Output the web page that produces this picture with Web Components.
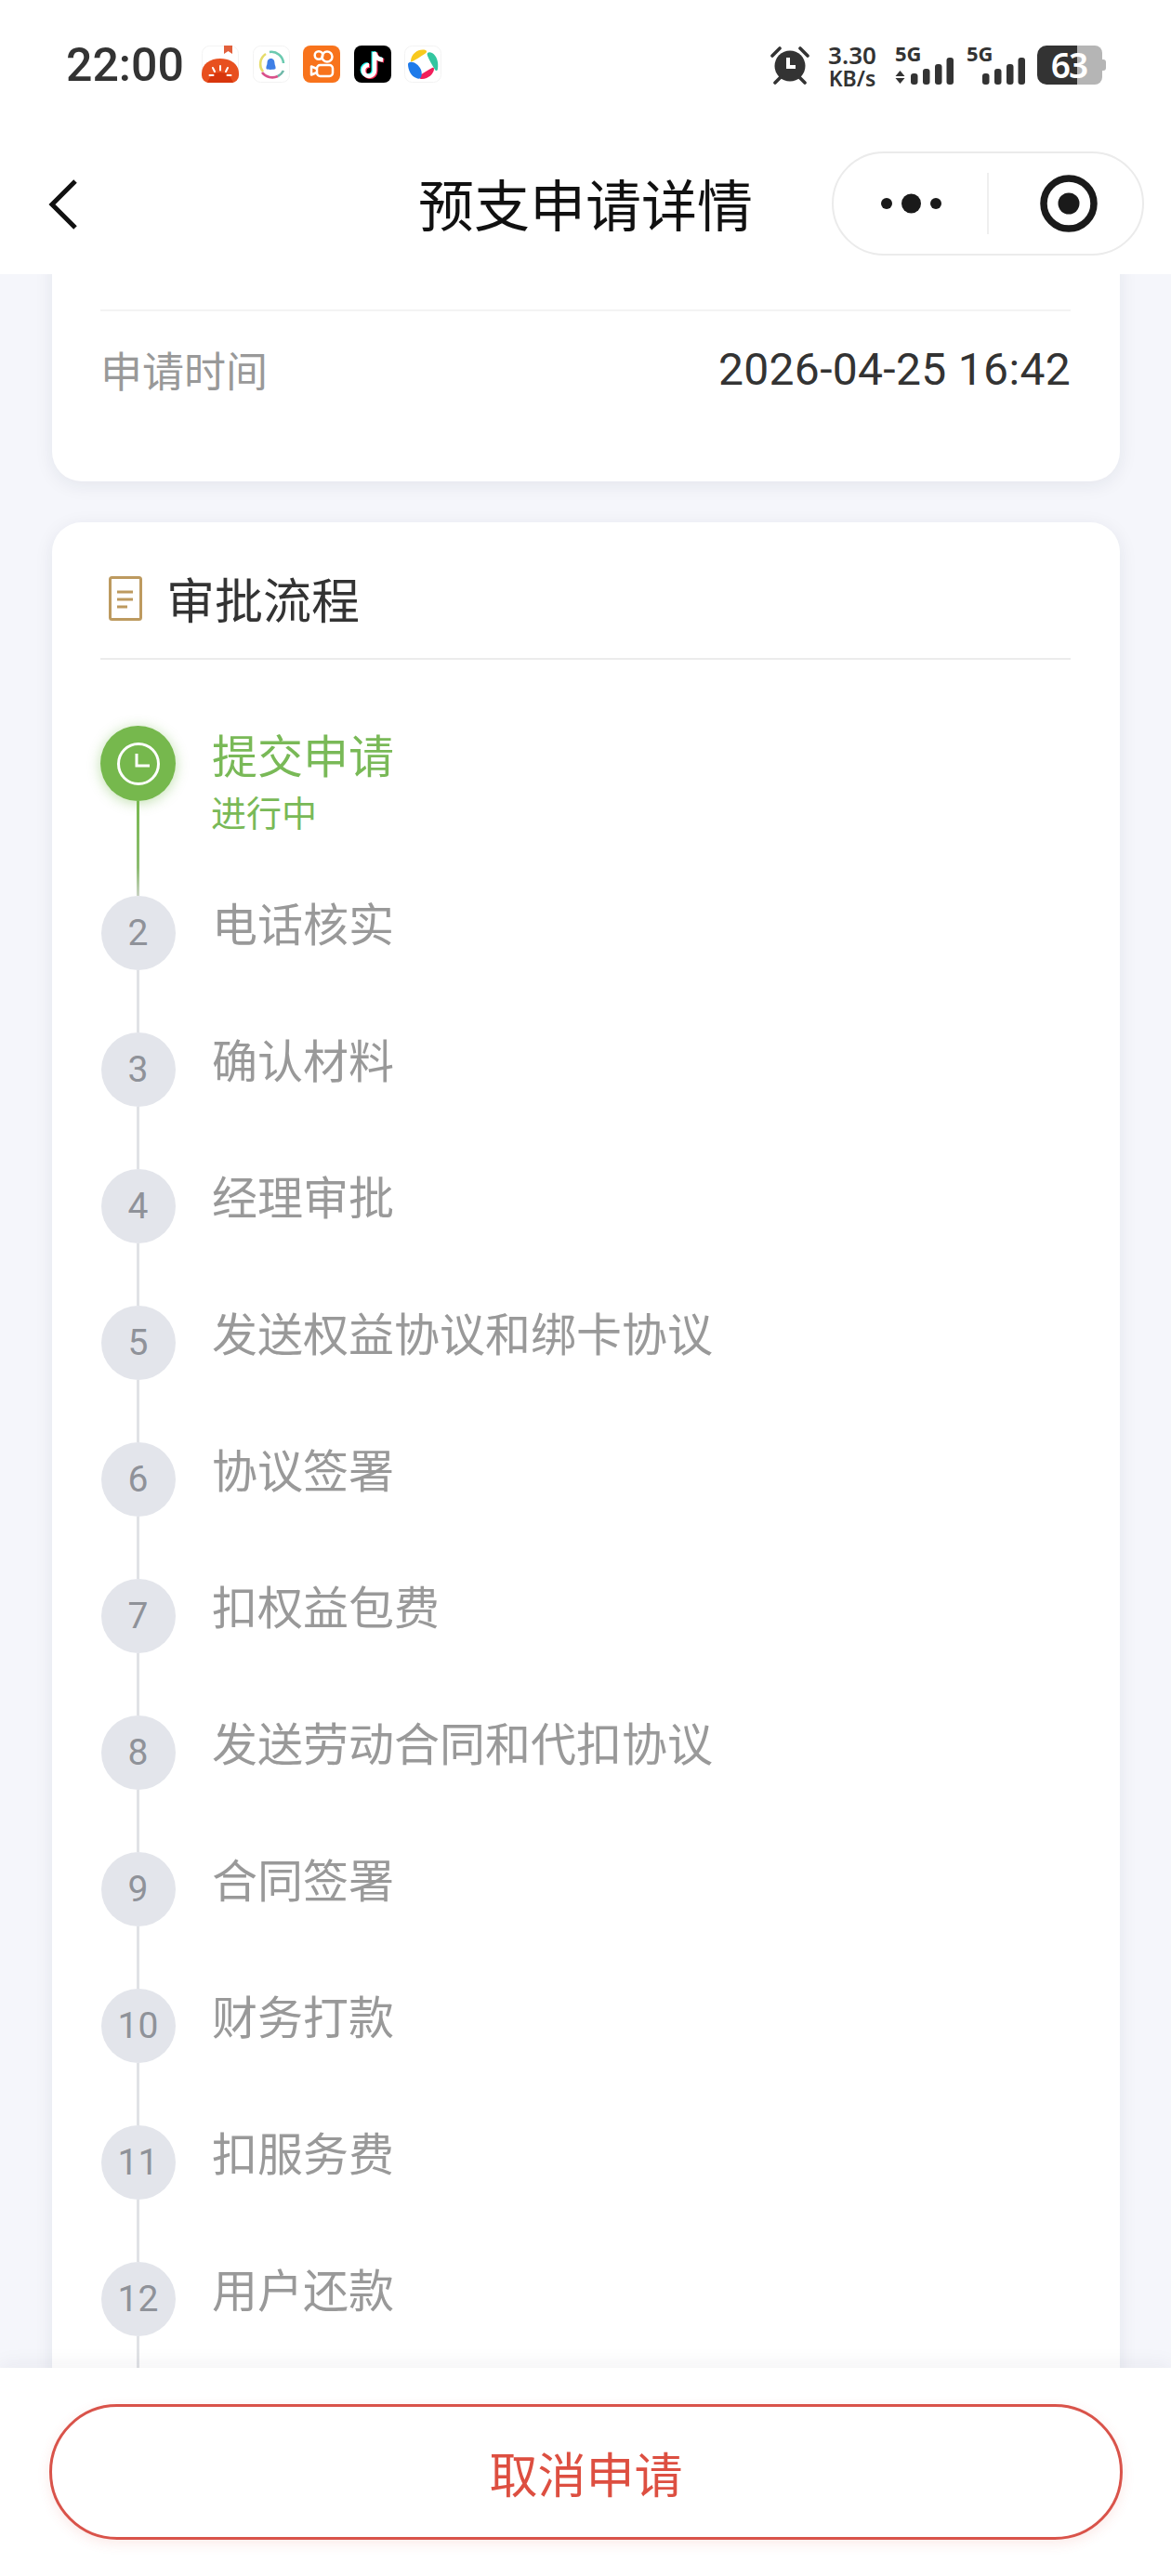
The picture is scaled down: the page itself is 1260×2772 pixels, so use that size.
<!DOCTYPE html>
<html lang="zh">
<head>
<meta charset="utf-8">
<title>预支申请详情</title>
<style>
  html, body { margin: 0; padding: 0; }
  body {
    width: 1260px;
    height: 2772px;
    overflow: hidden;
    background: #f5f6fb;
    font-family: Roboto, "Noto Sans CJK SC", sans-serif;
  }
</style>
</head>
<body>
<app-page>
  <status-bar slot="top"></status-bar>
  <nav-bar slot="top">预支申请详情</nav-bar>

  <app-card flush>
    <detail-row label="申请时间">2026-04-25 16:42</detail-row>
  </app-card>

  <app-card>
    <section-header>审批流程</section-header>
    <flow-list>
      <flow-step state="active" note="进行中">提交申请</flow-step>
      <flow-step num="2">电话核实</flow-step>
      <flow-step num="3">确认材料</flow-step>
      <flow-step num="4">经理审批</flow-step>
      <flow-step num="5">发送权益协议和绑卡协议</flow-step>
      <flow-step num="6">协议签署</flow-step>
      <flow-step num="7">扣权益包费</flow-step>
      <flow-step num="8">发送劳动合同和代扣协议</flow-step>
      <flow-step num="9">合同签署</flow-step>
      <flow-step num="10">财务打款</flow-step>
      <flow-step num="11">扣服务费</flow-step>
      <flow-step num="12">用户还款</flow-step>
    </flow-list>
  </app-card>

  <cancel-bar slot="bottom">取消申请</cancel-bar>
</app-page>

<script>
// AppPage.js
class AppPage extends HTMLElement {
  constructor() {
    super();
    this.attachShadow({ mode: 'open' });
    this.shadowRoot.innerHTML = `
      <style>
        :host { display: flex; flex-direction: column; width: 1260px; height: 2772px; overflow: hidden; }
        .head { background: #fff; position: relative; z-index: 2; }
        .body { flex: 1; min-height: 0; overflow: hidden; padding: 0 55px 0 56px; display: flex; flex-direction: column; gap: 44px; }
        .foot { position: relative; z-index: 2; }
      </style>
      <div class="head"><slot name="top"></slot></div>
      <div class="body"><slot></slot></div>
      <div class="foot"><slot name="bottom"></slot></div>
    `;
  }
}

// StatusBar.js
class StatusBar extends HTMLElement {
  constructor() {
    super();
    this.attachShadow({ mode: 'open' });
    const bars = `
      <rect x="17" y="30" width="7.500" height="12" rx="3" fill="#333"/>
      <rect x="30" y="25" width="7.500" height="17" rx="3" fill="#333"/>
      <rect x="43" y="20" width="7.500" height="22" rx="3" fill="#333"/>
      <rect x="55.500" y="13" width="7.500" height="29" rx="3" fill="#333"/>`;
    this.shadowRoot.innerHTML = `
      <style>
        :host { display: flex; justify-content: space-between; align-items: flex-start; height: 143px; box-sizing: border-box; padding: 49px 70px 0 71px; color: #333; }
        .left, .right { display: flex; align-items: flex-start; }
        .time { font: 500 50px/42px Roboto, sans-serif; width: 146px; letter-spacing: 0; }
        .apps { display: flex; gap: 14.5px; }
        .apps svg { display: block; width: 40px; height: 40px; }
        .alarm { width: 42px; height: 42px; display: block; margin-right: 20px; }
        .speed { width: 52px; margin-right: 20px; font-family: "Noto Sans", sans-serif; font-weight: 600; text-align: center; display: flex; flex-direction: column; align-items: center; }
        .speed b { font-weight: 600; font-size: 26px; line-height: 20px; }
        .speed i { font-style: normal; font-size: 23px; line-height: 18px; margin-top: 6px; white-space: nowrap; }
        .sim { display: grid; width: 63px; height: 42px; }
        .sim > * { grid-area: 1 / 1; }
        .sim svg { display: block; width: 63px; height: 42px; }
        .sim span { font: 700 22px/17px "Noto Sans", sans-serif; }
        .sim.a { margin-right: 14px; }
        .sim.b { margin-right: 13px; }
        .battery { display: grid; width: 74px; height: 42px; }
        .battery > * { grid-area: 1 / 1; }
        .battery svg { display: block; width: 74px; height: 42px; }
        .battery span { color: #fff; font: 600 37px/42px "Noto Sans", sans-serif; letter-spacing: -2px; text-align: center; padding-right: 6px; }
      </style>
      <div class="left">
        <div class="time">22:00</div>
        <div class="apps">
          <svg viewBox="0 0 40 40">
            <rect x=".5" y=".5" width="39" height="39" rx="8" fill="#fff" stroke="#f3f3f3"/>
            <path d="M24 0h9v9l-4.500-3L24 9z" fill="#e2603c"/>
            <path d="M0 30C0 20 9 14 20 14s20 6 20 16v2a8 8 0 0 1-8 8H8a8 8 0 0 1-8-8z" fill="#e8501f"/>
            <path d="M6 40c3-8 8-11 14-11s11 3 14 11z" fill="#d8360c"/>
            <path d="M20 22v4.500M12 24l2 4M28 24l-2 4M8.500 32h4M27.500 32h4" stroke="#fff" stroke-width="2" stroke-linecap="round" fill="none"/>
          </svg>
          <svg viewBox="0 0 40 40">
            <rect x=".5" y=".5" width="39" height="39" rx="8" fill="#fff" stroke="#f3f3f3"/>
            <path d="M11 28A13 13 0 0 1 14 9" stroke="#e6dc6a" stroke-width="2.600" fill="none"/>
            <path d="M18 7A13 13 0 0 1 33 19" stroke="#6ccab0" stroke-width="2.600" fill="none"/>
            <path d="M10 29A14 14 0 0 0 27 33" stroke="#d9508a" stroke-width="2.600" fill="none"/>
            <path d="M27 33A14 14 0 0 0 33 27" stroke="#6fb8a8" stroke-width="2.600" fill="none"/>
            <path d="M19.500 14c3 0 4 2.500 4 5 0 2 1.500 3.500 1 6-2.500 1.200-8.500 1.200-10 0-.5-2.500 1-4 1-6 0-2.500 1-5 4-5z" fill="#3f7fe6"/>
          </svg>
          <svg viewBox="0 0 40 40">
            <rect width="40" height="40" rx="8" fill="#f8731c"/>
            <circle cx="17" cy="10.500" r="4.300" fill="none" stroke="#fff" stroke-width="2.500"/>
            <circle cx="26" cy="12" r="5.500" fill="none" stroke="#fff" stroke-width="2.500"/>
            <rect x="15" y="21" width="17" height="12" rx="3.500" fill="none" stroke="#fff" stroke-width="2.500"/>
            <path d="M15 25l-6-2.500v9l6-2.500" fill="none" stroke="#fff" stroke-width="2.500" stroke-linejoin="round"/>
          </svg>
          <svg viewBox="0 0 40 40">
            <rect width="40" height="40" rx="8" fill="#000"/>
            <path d="M22 7v20a6 6 0 1 1-6-6M22 7c.5 5 4 8 9 8.500" fill="none" stroke="#25f4ee" stroke-width="4.500" transform="translate(-1.200 -.8)"/>
            <path d="M22 7v20a6 6 0 1 1-6-6M22 7c.5 5 4 8 9 8.500" fill="none" stroke="#fe2c55" stroke-width="4.500" transform="translate(1.200 .8)"/>
            <path d="M22 7v20a6 6 0 1 1-6-6M22 7c.5 5 4 8 9 8.500" fill="none" stroke="#fff" stroke-width="4.500"/>
          </svg>
          <svg viewBox="0 0 40 40">
            <rect x=".5" y=".5" width="39" height="39" rx="8" fill="#fff" stroke="#f3f3f3"/>
            <path d="M7 16C8 8 16 3 23 5c2 1 1 3-1 4-5 3-9 6-13 8-2 1-2 0-2-1z" fill="#f8c91e"/>
            <path d="M25 8c1-1 3-1 5 0 5 3 7 10 6 17 0 2-2 3-3 1-3-5-6-10-8-15-.5-1-.5-2 0-3z" fill="#33c6a0"/>
            <path d="M32 25c0 5-6 11-13 11-3 0-4-2-2-4 4-3 9-6 13-8 1-.5 2 0 2 1z" fill="#f21f5b"/>
            <path d="M6 18c4-1 9 2 12 8 1 3 1 6 0 8-1 2-3 2-5 1-6-2-9-9-9-15 0-1 1-2 2-2z" fill="#1f7bea"/>
          </svg>
        </div>
      </div>
      <div class="right">
        <svg class="alarm" viewBox="0 0 42 42">
          <circle cx="21" cy="22" r="16.500" fill="#333"/>
          <path d="M2 11l8-8M40 11l-8-8M5 40l6-6M37 40l-6-6" stroke="#333" stroke-width="3.600" stroke-linecap="round" fill="none"/>
          <path d="M19 13v10h8" stroke="#fff" stroke-width="4" fill="none"/>
        </svg>
        <div class="speed"><b>3.30</b><i>KB/s</i></div>
        <div class="sim a">
          <svg viewBox="0 0 63 42">
            <path d="M5.500 27l5 6H.5zM.5 35h10l-5 6z" fill="#333"/>
            ${bars}
          </svg>
          <span>5G</span>
        </div>
        <div class="sim b">
          <svg viewBox="0 0 63 42">${bars}</svg>
          <span>5G</span>
        </div>
        <div class="battery">
          <svg viewBox="0 0 74 42">
            <path d="M43 0h19a8 8 0 0 1 8 8v26a8 8 0 0 1-8 8H43z" fill="#b5b5b5"/>
            <path d="M70 15h1a3 3 0 0 1 3 3v6a3 3 0 0 1-3 3h-1z" fill="#b5b5b5"/>
            <path d="M43 0H10A10 10 0 0 0 0 10v22a10 10 0 0 0 10 10h33z" fill="#333"/>
          </svg>
          <span>63</span>
        </div>
      </div>
    `;
  }
}

// NavBar.js
class NavBar extends HTMLElement {
  constructor() {
    super();
    this.attachShadow({ mode: 'open' });
    this.shadowRoot.innerHTML = `
      <style>
        :host { display: grid; grid-template-columns: 1fr auto 1fr; align-items: center; height: 152px; box-sizing: border-box; padding: 0 29px; color: #111; }
        .back { display: block; width: 36px; height: 56px; margin-left: 21px; }
        .title { font-size: 60px; line-height: 76px; font-family: "Noto Sans CJK SC", sans-serif; padding-bottom: 2px; }
        .capsule { justify-self: end; box-sizing: border-box; width: 336px; height: 112px; border: 2px solid #ebebeb; border-radius: 56px; display: flex; align-items: center; }
        .capsule div { flex: 1; display: flex; justify-content: center; align-items: center; height: 66px; padding-left: 6px; }
        .capsule div:first-child { border-right: 2px solid #efefef; width: 167px; flex: none; box-sizing: border-box; padding-left: 0; }
        svg { display: block; }
      </style>
      <svg class="back" viewBox="0 0 36 56"><path d="M31 4L6 29l25 25" fill="none" stroke="#111" stroke-width="5"/></svg>
      <div class="title"><slot></slot></div>
      <div class="capsule">
        <div>
          <svg width="66" height="24" viewBox="0 0 66 24"><circle cx="7" cy="12" r="6" fill="#1a1a1a"/><circle cx="33.500" cy="12" r="10.500" fill="#1a1a1a"/><circle cx="60" cy="12" r="6" fill="#1a1a1a"/></svg>
        </div>
        <div>
          <svg width="62" height="62" viewBox="0 0 62 62"><circle cx="31" cy="31" r="27" fill="none" stroke="#1a1a1a" stroke-width="7.500"/><circle cx="31" cy="31" r="11.500" fill="#1a1a1a"/></svg>
        </div>
      </div>
    `;
  }
}

// AppCard.js
class AppCard extends HTMLElement {
  constructor() {
    super();
    this.attachShadow({ mode: 'open' });
    this.shadowRoot.innerHTML = `
      <style>
        :host { display: block; flex: none; background: #fff; border-radius: 32px; box-shadow: 0 4px 20px rgba(30, 35, 60, 0.08); padding: 0 53px 0 52px; }
        :host([flush]) { margin-top: -40px; padding-top: 78px; padding-bottom: 59px; }
      </style>
      <slot></slot>
    `;
  }
}

// DetailRow.js
class DetailRow extends HTMLElement {
  constructor() {
    super();
    this.attachShadow({ mode: 'open' });
    this.shadowRoot.innerHTML = `
      <style>
        :host { display: flex; justify-content: space-between; align-items: center; height: 126px; box-sizing: border-box; border-top: 2px solid #f3f3f3; }
        .label { color: #999; font-size: 45px; }
        .value { color: #333; font-size: 48px; letter-spacing: 0.33px; }
      </style>
      <span class="label">${this.getAttribute('label') || ''}</span>
      <span class="value"><slot></slot></span>
    `;
  }
}

// SectionHeader.js
class SectionHeader extends HTMLElement {
  constructor() {
    super();
    this.attachShadow({ mode: 'open' });
    this.shadowRoot.innerHTML = `
      <style>
        :host { display: flex; align-items: center; height: 148px; box-sizing: border-box; border-bottom: 2px solid #ececec; padding: 18px 0 0 9px; }
        svg { display: block; width: 36px; height: 48px; margin-right: 26px; flex: none; margin-top: 0; }
        span { color: #333; font-size: 52px; line-height: 60px; font-family: "Noto Sans CJK SC", sans-serif; }
      </style>
      <svg viewBox="0 0 36 48">
        <rect x="1.500" y="1.500" width="33" height="45" rx="2" fill="#fff" stroke="#bd9a5f" stroke-width="3"/>
        <path d="M9 17h17M9 25h17M9 33h11" stroke="#bd9a5f" stroke-width="3" fill="none"/>
      </svg>
      <span><slot></slot></span>
    `;
  }
}

// FlowList.js
class FlowList extends HTMLElement {
  constructor() {
    super();
    this.attachShadow({ mode: 'open' });
    this.shadowRoot.innerHTML = `
      <style>
        :host { display: flex; flex-direction: column; padding-top: 71px; }
      </style>
      <slot></slot>
    `;
  }
}

// FlowStep.js
class FlowStep extends HTMLElement {
  constructor() {
    super();
    this.attachShadow({ mode: 'open' });
    const active = this.getAttribute('state') === 'active';
    const note = this.getAttribute('note');
    const mark = active
      ? `<svg width="48" height="48" viewBox="0 0 48 48"><circle cx="24" cy="24" r="21.500" fill="none" stroke="#fff" stroke-width="3"/><path d="M22 13v13h14" fill="none" stroke="#fff" stroke-width="3"/></svg>`
      : (this.getAttribute('num') || '');
    this.shadowRoot.innerHTML = `
      <style>
        :host { display: flex; height: 147px; }
        :host([state="active"]) { height: 183px; }
        .rail { width: 81px; flex: none; display: flex; flex-direction: column; align-items: center; }
        .dot { width: 80px; height: 80px; flex: none; border-radius: 50%; background: #e3e5eb; color: #8f9299; font-size: 39px; display: flex; align-items: center; justify-content: center; }
        .line { width: 3px; flex: 1; background: #e0e2e6; }
        :host([state="active"]) .dot { width: 81px; height: 81px; background: #76b84d; box-shadow: 0 2px 14px rgba(116, 184, 75, 0.45); }
        :host([state="active"]) .line { background: linear-gradient(#76b84d, #8cbc70 70%, #c9d2c3); }
        .text { margin-left: 39px; padding-top: 2px; }
        .label { color: #999; font-size: 49px; line-height: 62px; }
        :host([state="active"]) .text { color: #79b957; padding-top: 3px; }
        :host([state="active"]) .label { color: #79b957; line-height: 64px; }
        .note { font-size: 38px; line-height: 50px; margin-top: 3px; margin-left: -1px; }
        svg { display: block; }
      </style>
      <div class="rail"><div class="dot">${mark}</div><div class="line"></div></div>
      <div class="text">
        <div class="label"><slot></slot></div>
        ${note ? `<div class="note">${note}</div>` : ''}
      </div>
    `;
  }
}

// CancelBar.js
class CancelBar extends HTMLElement {
  constructor() {
    super();
    this.attachShadow({ mode: 'open' });
    this.shadowRoot.innerHTML = `
      <style>
        :host { display: block; height: 224px; box-sizing: border-box; background: #fff; padding: 39px 52px 0 53px; box-shadow: 0 -4px 20px rgba(30, 35, 60, 0.06); }
        .btn { height: 146px; box-sizing: border-box; border: 3px solid #d9534a; border-radius: 73px; background: #fff; color: #dd4f41; font-size: 52px; display: flex; align-items: center; justify-content: center; box-shadow: 0 4px 14px rgba(224, 72, 58, 0.12); }
      </style>
      <div class="btn"><slot></slot></div>
    `;
  }
}

customElements.define('app-page', AppPage);
customElements.define('status-bar', StatusBar);
customElements.define('nav-bar', NavBar);
customElements.define('app-card', AppCard);
customElements.define('detail-row', DetailRow);
customElements.define('section-header', SectionHeader);
customElements.define('flow-list', FlowList);
customElements.define('flow-step', FlowStep);
customElements.define('cancel-bar', CancelBar);
</script>
</body>
</html>
